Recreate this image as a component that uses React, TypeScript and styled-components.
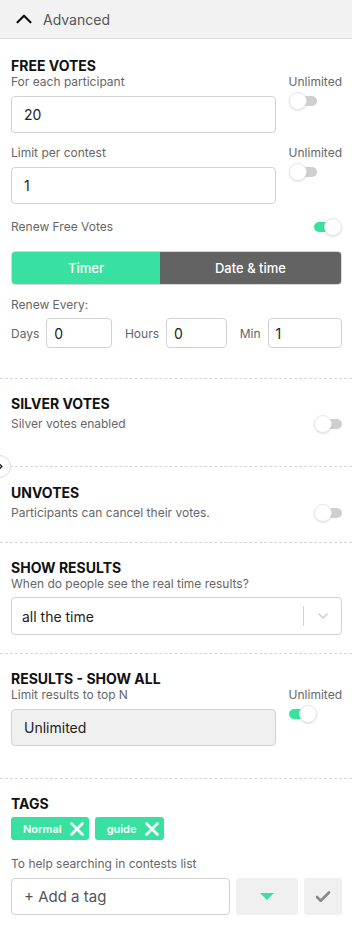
import React from 'react';
import styled, { createGlobalStyle } from 'styled-components';
import { ChevronUp, ChevronDown, ChevronRight, X, Check } from 'lucide-react';

const GREEN = '#38e1a1';

const GlobalStyle = createGlobalStyle`
  body {
    margin: 0;
    background: #ffffff;
    font-family: Inter, "Noto Sans", "Liberation Sans", sans-serif;
    color: #111111;
  }
  * { box-sizing: border-box; }
`;

const Panel = styled.div`
  width: 352px;
  min-height: 927px;
  position: relative;
  background: #ffffff;
`;

const Header = styled.div`
  height: 39px;
  display: flex;
  align-items: center;
  gap: 6px;
  padding-left: 11px;
  background: #f2f2f2;
  border-bottom: 1px solid #dcdcdc;
  font-size: 14px;
  color: #555555;
`;

const Section = styled.div<{ $dashed?: boolean; $pt?: number; $pb?: number }>`
  padding: ${p => p.$pt ?? 24}px 10px ${p => p.$pb ?? 24}px 11px;
  border-top: ${p => (p.$dashed ? '1px dashed #d6d6d6' : 'none')};
  position: relative;
`;

const Title = styled.div`
  font-size: 14px;
  font-weight: 700;
  line-height: 17px;
  color: #111111;
`;

const Hint = styled.div<{ $mt?: number }>`
  font-size: 12px;
  line-height: 16px;
  color: #666666;
  margin-top: ${p => p.$mt ?? 0}px;
`;

const FieldRow = styled.div<{ $mt?: number }>`
  display: grid;
  grid-template-columns: 1fr 53px;
  column-gap: 13px;
  margin-top: ${p => p.$mt ?? 0}px;
`;

const FieldMain = styled.div`
  display: flex;
  flex-direction: column;
  gap: 6px;
`;

const FieldSide = styled.div`
  display: flex;
  flex-direction: column;
  align-items: flex-start;
  gap: 2px;
`;

const SideLabel = styled.div`
  font-size: 12px;
  line-height: 16px;
  color: #666666;
  align-self: flex-end;
`;

const Input = styled.div<{ $disabled?: boolean }>`
  height: 37px;
  display: flex;
  align-items: center;
  padding-left: 12px;
  border: 1px solid #d2d2d2;
  border-radius: 4px;
  background: ${p => (p.$disabled ? '#f0f0f0' : '#ffffff')};
  font-size: 14px;
  color: #222222;
`;

const ToggleWrap = styled.div`
  position: relative;
  width: 28px;
  height: 18px;
  flex-shrink: 0;
`;

const ToggleTrack = styled.div<{ $on?: boolean }>`
  position: absolute;
  top: 4px;
  left: ${p => (p.$on ? '0' : '4px')};
  width: 24px;
  height: 10px;
  border-radius: 5px;
  background: ${p => (p.$on ? GREEN : '#cfcfcf')};
`;

const ToggleKnob = styled.div<{ $on?: boolean }>`
  position: absolute;
  top: 0;
  left: ${p => (p.$on ? '10px' : '0')};
  width: 18px;
  height: 18px;
  border-radius: 50%;
  background: #ffffff;
  border: 1px solid #e6e6e6;
  box-shadow: 0 1px 2px rgba(0, 0, 0, 0.12);
`;

function Toggle({ on }: { on?: boolean }) {
  return (
    <ToggleWrap>
      <ToggleTrack $on={on} />
      <ToggleKnob $on={on} />
    </ToggleWrap>
  );
}

const InlineRow = styled.div<{ $mt?: number }>`
  display: flex;
  justify-content: space-between;
  align-items: center;
  margin-top: ${p => p.$mt ?? 0}px;
`;

const Tabs = styled.div`
  display: flex;
  height: 34px;
  margin-top: 15px;
  border-radius: 4px;
  overflow: hidden;
  border: 1px solid #d8d8d8;
`;

const Tab = styled.div<{ $active?: boolean; $w?: number }>`
  flex: ${p => (p.$w ? `0 0 ${p.$w}px` : '1')};
  display: flex;
  align-items: center;
  justify-content: center;
  font-size: 13px;
  font-weight: 500;
  color: #ffffff;
  background: ${p => (p.$active ? GREEN : '#636363')};
`;

const RenewRow = styled.div`
  display: flex;
  align-items: center;
  margin-top: 5px;
`;

const SmallLabel = styled.span<{ $ml?: number }>`
  font-size: 12px;
  color: #666666;
  margin-left: ${p => p.$ml ?? 0}px;
  margin-right: 7px;
`;

const SmallInput = styled.div<{ $w: number }>`
  width: ${p => p.$w}px;
  height: 30px;
  display: flex;
  align-items: center;
  padding-left: 7px;
  border: 1px solid #d2d2d2;
  border-radius: 4px;
  font-size: 14px;
  color: #222222;
`;

const SideHandle = styled.div`
  position: absolute;
  left: -12px;
  top: -12px;
  width: 23px;
  height: 23px;
  border-radius: 50%;
  border: 1px solid #dcdcdc;
  background: #ffffff;
  display: flex;
  align-items: center;
  justify-content: flex-end;
  padding-right: 4px;
`;

const Select = styled.div`
  height: 38px;
  margin-top: 5px;
  display: flex;
  align-items: center;
  border: 1px solid #d2d2d2;
  border-radius: 4px;
  font-size: 14px;
  color: #222222;
`;

const SelectValue = styled.div`
  flex: 1;
  padding-left: 10px;
`;

const SelectSep = styled.div`
  width: 1px;
  height: 20px;
  background: #d2d2d2;
`;

const SelectArrow = styled.div`
  width: 37px;
  display: flex;
  justify-content: center;
  align-items: center;
`;

const Chips = styled.div`
  display: flex;
  gap: 6px;
  margin-top: 5px;
`;

const Chip = styled.div`
  height: 23px;
  display: flex;
  align-items: center;
  gap: 4px;
  padding: 0 1px 0 12px;
  border-radius: 3px;
  background: ${GREEN};
  color: #ffffff;
  font-size: 11px;
  font-weight: 600;
`;

const TagRow = styled.div`
  display: flex;
  gap: 6px;
  margin-top: 6px;
`;

const TagInput = styled(Input)`
  width: 219px;
  font-size: 15px;
  color: #555555;
  padding-left: 12px;
`;

const GrayButton = styled.div<{ $w: number }>`
  width: ${p => p.$w}px;
  height: 37px;
  display: flex;
  align-items: center;
  justify-content: center;
  background: #f0f0f0;
  border-radius: 3px;
`;

const Caret = styled.div`
  width: 0;
  height: 0;
  border-left: 7px solid transparent;
  border-right: 7px solid transparent;
  border-top: 7px solid ${GREEN};
`;

export default function App() {
  return (
    <Panel>
      <GlobalStyle />
      <Header>
        <ChevronUp size={26} strokeWidth={2} color="#111" />
        <span>Advanced</span>
      </Header>

      <Section $pt={18} $pb={30}>
        <Title>FREE VOTES</Title>
        <FieldRow>
          <FieldMain>
            <Hint>For each participant</Hint>
            <Input>20</Input>
          </FieldMain>
          <FieldSide>
            <SideLabel>Unlimited</SideLabel>
            <Toggle />
          </FieldSide>
        </FieldRow>
        <FieldRow $mt={12}>
          <FieldMain>
            <Hint>Limit per contest</Hint>
            <Input>1</Input>
          </FieldMain>
          <FieldSide>
            <SideLabel>Unlimited</SideLabel>
            <Toggle />
          </FieldSide>
        </FieldRow>
        <InlineRow $mt={14}>
          <Hint>Renew Free Votes</Hint>
          <Toggle on />
        </InlineRow>
        <Tabs>
          <Tab $active $w={148}>Timer</Tab>
          <Tab>Date &amp; time</Tab>
        </Tabs>
        <Hint $mt={12}>Renew Every:</Hint>
        <RenewRow>
          <SmallLabel>Days</SmallLabel>
          <SmallInput $w={67}>0</SmallInput>
          <SmallLabel $ml={13}>Hours</SmallLabel>
          <SmallInput $w={62}>0</SmallInput>
          <SmallLabel $ml={13}>Min</SmallLabel>
          <SmallInput $w={76}>1</SmallInput>
        </RenewRow>
      </Section>

      <Section $dashed $pt={16} $pb={33}>
        <Title>SILVER VOTES</Title>
        <InlineRow $mt={3}>
          <Hint>Silver votes enabled</Hint>
          <Toggle />
        </InlineRow>
      </Section>

      <Section $dashed $pt={17} $pb={20}>
        <SideHandle>
          <ChevronRight size={11} strokeWidth={3} color="#111" />
        </SideHandle>
        <Title>UNVOTES</Title>
        <InlineRow $mt={3}>
          <Hint>Participants can cancel their votes.</Hint>
          <Toggle />
        </InlineRow>
      </Section>

      <Section $dashed $pt={16} $pb={18}>
        <Title>SHOW RESULTS</Title>
        <Hint>When do people see the real time results?</Hint>
        <Select>
          <SelectValue>all the time</SelectValue>
          <SelectSep />
          <SelectArrow>
            <ChevronDown size={16} strokeWidth={2} color="#c8c8c8" />
          </SelectArrow>
        </Select>
      </Section>

      <Section $dashed $pt={16} $pb={32}>
        <Title>RESULTS - SHOW ALL</Title>
        <FieldRow>
          <FieldMain>
            <Hint>Limit results to top N</Hint>
            <Input $disabled>Unlimited</Input>
          </FieldMain>
          <FieldSide>
            <SideLabel>Unlimited</SideLabel>
            <Toggle on />
          </FieldSide>
        </FieldRow>
      </Section>

      <Section $dashed $pt={16} $pb={12}>
        <Title>TAGS</Title>
        <Chips>
          <Chip>
            Normal
            <X size={22} strokeWidth={2.8} color="#fff" />
          </Chip>
          <Chip>
            guide
            <X size={22} strokeWidth={2.8} color="#fff" />
          </Chip>
        </Chips>
        <Hint $mt={16}>To help searching in contests list</Hint>
        <TagRow>
          <TagInput>+ Add a tag</TagInput>
          <GrayButton $w={62}>
            <Caret />
          </GrayButton>
          <GrayButton $w={38}>
            <Check size={18} strokeWidth={3.5} color="#8a8a8a" />
          </GrayButton>
        </TagRow>
      </Section>
    </Panel>
  );
}
